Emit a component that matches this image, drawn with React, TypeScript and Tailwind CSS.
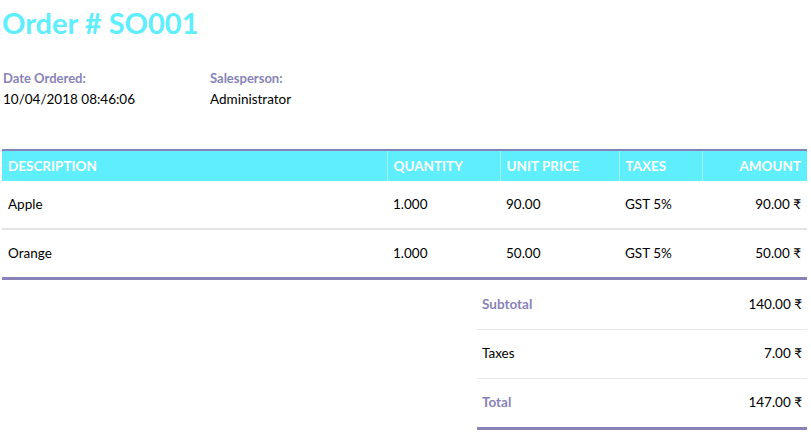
import * as React from 'react';

type Line = { name: string; qty: string; price: string; tax: string; amount: string };

const lines: Line[] = [
  { name: 'Apple', qty: '1.000', price: '90.00', tax: 'GST 5%', amount: '90.00 ₹' },
  { name: 'Orange', qty: '1.000', price: '50.00', tax: 'GST 5%', amount: '50.00 ₹' }
];

const totals = [
  { label: 'Subtotal', value: '140.00 ₹', strong: true },
  { label: 'Taxes', value: '7.00 ₹', strong: false },
  { label: 'Total', value: '147.00 ₹', strong: true }
];

export default function App() {
  return (
    <div
      className="w-[811px] h-[447px] overflow-hidden bg-white text-black pl-[2px] pr-[4px]"
      style={{ fontFamily: 'Lato, "Open Sans", sans-serif' }}
    >
      <h1 className="pt-[5px] text-[29px] font-bold leading-[36px] text-[#5eeefc]">
        Order # SO001
      </h1>

      <div className="mt-[28px] flex pl-px text-[13.5px]">
        <div className="w-[207px]">
          <div className="text-[13px] font-bold leading-[18px] text-[#8783b8]">Date Ordered:</div>
          <div className="leading-[24px]">10/04/2018 08:46:06</div>
        </div>
        <div>
          <div className="text-[13px] font-bold leading-[18px] text-[#8783b8]">Salesperson:</div>
          <div className="leading-[24px]">Administrator</div>
        </div>
      </div>

      <table className="mt-[38px] w-[805px] table-fixed border-collapse text-[13.5px]">
        <colgroup>
          <col className="w-[385px]" />
          <col className="w-[113px]" />
          <col className="w-[119px]" />
          <col className="w-[83px]" />
          <col className="w-[105px]" />
        </colgroup>
        <thead>
          <tr className="border-t-2 border-[#8783b8] bg-[#5eeefc] text-[13.5px] font-bold text-white">
            <th className="h-[31px] border-r border-white/40 px-[6px] pt-px text-left">DESCRIPTION</th>
            <th className="h-[31px] border-r border-white/40 px-[6px] pt-px text-left">QUANTITY</th>
            <th className="h-[31px] border-r border-white/40 px-[6px] pt-px text-left">UNIT PRICE</th>
            <th className="h-[31px] border-r border-white/40 px-[6px] pt-px text-left">TAXES</th>
            <th className="h-[31px] px-[6px] pt-px text-right">AMOUNT</th>
          </tr>
        </thead>
        <tbody>
          {lines.map((l, i) => {
            const last = i === lines.length - 1;
            const cell = last ? 'h-[49px] px-[6px]' : 'h-[48px] px-[6px]';
            return (
              <tr
                key={l.name}
                className={last ? 'border-b-[3px] border-[#8783b8]' : 'border-b-2 border-[#e3e3e3]'}
              >
                <td className={cell}>{l.name}</td>
                <td className={cell}>{l.qty}</td>
                <td className={cell}>{l.price}</td>
                <td className={cell}>{l.tax}</td>
                <td className={cell + ' text-right'}>{l.amount}</td>
              </tr>
            );
          })}
        </tbody>
      </table>

      <div className="flex justify-end pt-px">
        <div className="w-[330px] border-b-[3px] border-[#8783b8] text-[13.5px]">
          {totals.map((t, i) => (
            <div
              key={t.label}
              className={
                i < totals.length - 1
                  ? 'flex h-[49px] items-center justify-between border-b border-[#e8e8e8] px-[5px]'
                  : 'flex h-[48px] items-center justify-between px-[5px]'
              }
            >
              <span className={t.strong ? 'font-bold text-[#8783b8]' : ''}>{t.label}</span>
              <span>{t.value}</span>
            </div>
          ))}
        </div>
      </div>
    </div>
  );
}
